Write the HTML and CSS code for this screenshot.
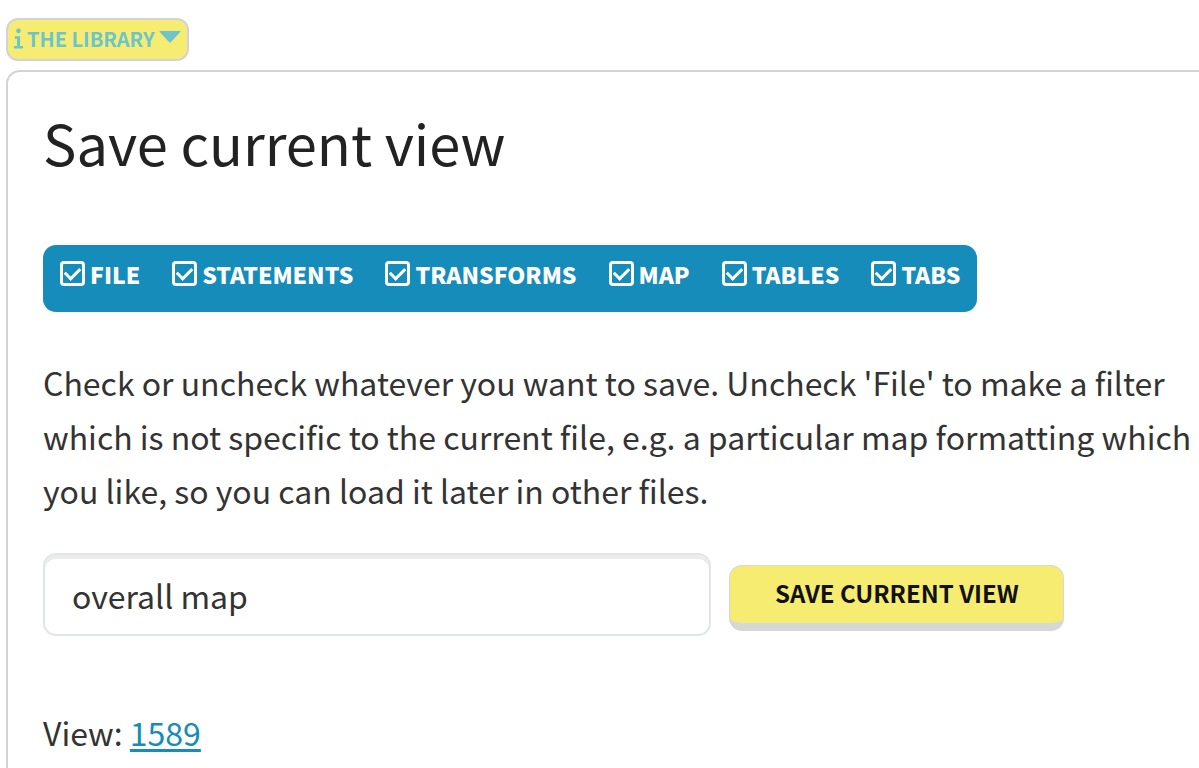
FILE: index.html
```html
<!DOCTYPE html>
<html lang="en">
<head>
<meta charset="utf-8">
<title>Save current view</title>
<link rel="stylesheet" href="styles.css">
</head>
<body>
<button class="library" type="button">
  <svg class="library-info" viewBox="0 0 10 24" aria-hidden="true"><circle cx="5" cy="3" r="2.600"/><path d="M1 9h5.800v10.800H10v2.800H0v-2.800h3.400v-8H1z"/></svg>
  <span>THE LIBRARY</span>
  <svg class="library-caret" viewBox="0 0 22 12" aria-hidden="true"><path d="M1 0h20q1 .3.3 1.100L12 11q-1 1-2 0L.7 1.100Q0 .3 1 0z"/></svg>
</button>
<main class="panel">
  <h1 class="title">Save current view</h1>
  <div class="toggles">
    <label class="toggle"><input class="check" type="checkbox" checked><span>FILE</span></label>
    <label class="toggle"><input class="check" type="checkbox" checked><span>STATEMENTS</span></label>
    <label class="toggle"><input class="check" type="checkbox" checked><span>TRANSFORMS</span></label>
    <label class="toggle"><input class="check" type="checkbox" checked><span>MAP</span></label>
    <label class="toggle"><input class="check" type="checkbox" checked><span>TABLES</span></label>
    <label class="toggle"><input class="check" type="checkbox" checked><span>TABS</span></label>
  </div>
  <p class="text">Check or uncheck whatever you want to save. Uncheck 'File' to make a filter which is not specific to the current file, e.g. a particular map formatting which you like, so you can load it later in other files.</p>
  <form class="save-form">
    <input class="name" type="text" value="overall map" aria-label="View name">
    <button class="save" type="button">SAVE CURRENT VIEW</button>
  </form>
  <p class="text">View: <a class="link" href="#1589">1589</a></p>
</main>
</body>
</html>
```

FILE: styles.css
```css
* {
  box-sizing: border-box;
}

html {
  overflow: hidden;
}

body {
  margin: 0;
  padding: 18px 0 0 6px;
  background: #fff;
  color: #333;
  font-family: "Noto Sans CJK SC", "Noto Sans", sans-serif;
}

.library {
  display: flex;
  align-items: center;
  gap: 4px;
  height: 43px;
  padding: 0 6px;
  border: 2px solid #d3d3d3;
  border-radius: 12px;
  background: #f6ec72;
  color: #6cc5cc;
  font: bold 20px/36px "Noto Sans CJK SC", "Noto Sans", sans-serif;
}

.library span {
  padding-bottom: 2px;
}

.library svg {
  fill: currentColor;
}

.library-info {
  width: 9px;
  height: 24px;
  margin-bottom: 2px;
}

.library-caret {
  width: 22px;
  height: 12px;
  margin-bottom: 6px;
}

.panel {
  margin-top: 9px;
  padding: 31px 0 36px 35px;
  border: 2px solid #d3d3d3;
  border-right: 0;
  border-bottom: 0;
  border-radius: 14px 0 0 0;
}

.title {
  margin: 0 0 65px;
  color: #222;
  font-size: 56px;
  font-weight: 400;
  line-height: 77px;
}

.toggles {
  display: flex;
  gap: 32px;
  width: fit-content;
  height: 67px;
  margin-bottom: 43px;
  padding: 12px 17px 0 17px;
  border-radius: 13px;
  background: #158cba;
  color: #fff;
  font-size: 23px;
  font-weight: 900;
  line-height: 34px;
}

.toggle {
  display: flex;
  gap: 5px;
  height: 36px;
}

.check {
  appearance: none;
  display: grid;
  place-items: center;
  width: 25px;
  height: 25px;
  margin: 4px 0 0;
  border: 3px solid #fff;
  border-radius: 4px;
}

.check:checked::before {
  content: "";
  width: 12px;
  height: 7px;
  margin-bottom: 4px;
  border: solid #fff;
  border-width: 0 0 3px 3px;
  rotate: -45deg;
}

.text {
  margin: 0;
  font-size: 32px;
  line-height: 54px;
}

.save-form {
  display: flex;
  align-items: center;
  gap: 18px;
  margin: 36px 0 69px;
}

.name {
  width: 668px;
  height: 83px;
  padding: 0 27px;
  border: 2px solid #e2e5e8;
  border-radius: 13px;
  background: #fff;
  box-shadow: inset 0 4px 0 #ebebeb;
  color: #333;
  font: 32px/54px "Noto Sans CJK SC", "Noto Sans", sans-serif;
}

.save {
  height: 66px;
  margin-top: 6px;
  padding: 0 44px 3px 45px;
  border: 1px solid #d7d7d7;
  border-bottom-width: 8px;
  border-radius: 13px;
  background: #f6ec72;
  color: #111;
  font: bold 24px/36px "Noto Sans CJK SC", "Noto Sans", sans-serif;
}

.link {
  color: #158cba;
  text-decoration-thickness: 3px;
  text-underline-offset: 3px;
}
```
